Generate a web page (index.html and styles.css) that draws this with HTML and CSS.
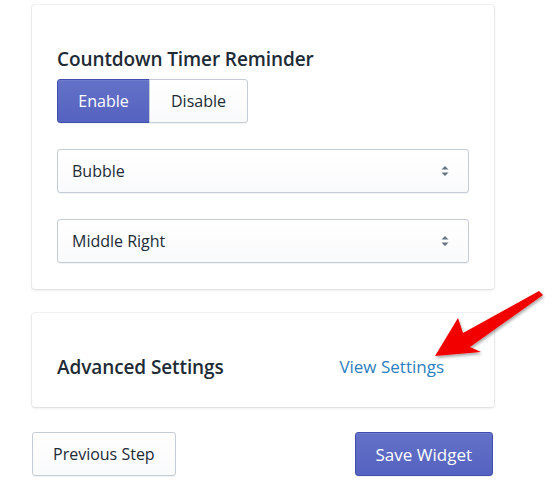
FILE: index.html
```html
<!DOCTYPE html>
<html>
<head>
<meta charset="utf-8">
<link rel="stylesheet" href="styles.css">
</head>
<body>
<div class="page">
  <section class="card card-main">
    <h2 class="heading">Countdown Timer Reminder</h2>
    <div class="segmented">
      <button class="btn btn-primary seg-left">Enable</button>
      <button class="btn seg-right">Disable</button>
    </div>
    <div class="select">
      <span>Bubble</span>
      <svg class="caret" width="10" height="12" viewBox="0 0 10 12"><path d="M5 1 L8.5 4.5 H1.5 Z M5 11 L8.5 7.5 H1.5 Z" fill="#637381"/></svg>
    </div>
    <div class="select">
      <span>Middle Right</span>
      <svg class="caret" width="10" height="12" viewBox="0 0 10 12"><path d="M5 1 L8.5 4.5 H1.5 Z M5 11 L8.5 7.5 H1.5 Z" fill="#637381"/></svg>
    </div>
  </section>
  <section class="card card-adv">
    <h2 class="heading heading-adv">Advanced Settings</h2>
    <a class="link" href="#">View Settings</a>
  </section>
  <div class="footer">
    <button class="btn btn-footer">Previous Step</button>
    <button class="btn btn-primary btn-footer btn-save">Save Widget</button>
  </div>
</div>
<svg class="pointer" width="558" height="494" viewBox="0 0 558 494">
  <defs>
    <filter id="sh" x="-20%" y="-20%" width="140%" height="140%">
      <feDropShadow dx="1" dy="2" stdDeviation="1.5" flood-color="#000" flood-opacity="0.35"/>
    </filter>
  </defs>
  <polygon points="435,356 458,318 463,333 539,291 543,295 470,347 481,352" fill="#f20000" filter="url(#sh)"/>
</svg>
</body>
</html>
```
FILE: styles.css
```css
* { box-sizing: border-box; }
html, body { margin: 0; padding: 0; background: #fff; }
body {
  font-family: "Open Sans", "Noto Sans", sans-serif;
  color: #212b36;
  position: relative;
  width: 558px;
  height: 494px;
  overflow: hidden;
}
.page {
  width: 462px;
  margin-left: 32px;
  padding-top: 5px;
}
.card {
  background: #fff;
  border-radius: 3px;
  box-shadow: 0 0 0 1px rgba(63,63,68,0.06), 0 1px 3px 0 rgba(63,63,68,0.15);
}
.card-main {
  padding: 42px 25px 26px;
  display: flex;
  flex-direction: column;
}
.heading {
  margin: 0;
  font-size: 19px;
  font-weight: 600;
  line-height: 24px;
  color: #212b36;
  letter-spacing: -0.1px;
}
.segmented {
  display: flex;
  margin-top: 8px;
}
.btn {
  font-family: inherit;
  font-size: 16px;
  height: 44px;
  padding: 0 20px;
  border: 1px solid #c4cdd5;
  border-radius: 3px;
  background: linear-gradient(to bottom, #fff, #f9fafb);
  color: #212b36;
  box-shadow: 0 1px 0 0 rgba(22,29,37,0.05);
  cursor: pointer;
}
.btn-primary {
  background: linear-gradient(to bottom, #6371c7, #5563c1);
  border-color: #3f4eae;
  color: #fff;
  box-shadow: inset 0 1px 0 0 #6f7bcb, 0 1px 0 0 rgba(22,29,37,0.05);
}
.seg-left {
  width: 93px;
  border-radius: 3px 0 0 3px;
}
.seg-right {
  width: 99px;
  border-radius: 0 3px 3px 0;
  margin-left: -1px;
  position: relative;
}
.select {
  margin-top: 26px;
  height: 44px;
  border: 1px solid #c4cdd5;
  border-radius: 3px;
  background: linear-gradient(to bottom, #fff, #f9fafb);
  box-shadow: 0 1px 0 0 rgba(22,29,37,0.05);
  display: flex;
  align-items: center;
  justify-content: space-between;
  padding: 0 18px 0 14px;
  font-size: 16px;
}
.caret { display: block; }
.card-adv {
  margin-top: 24px;
  height: 94px;
  padding: 42px 50px 0 25px;
  display: flex;
  justify-content: space-between;
  align-items: flex-start;
}
.heading-adv {
  font-size: 19px;
}
.link {
  color: #2c7fc0;
  text-decoration: none;
  font-size: 17px;
  line-height: 24px;
}
.footer {
  margin-top: 25px;
  display: flex;
  justify-content: space-between;
}
.btn-footer { padding: 0 20px; }
.btn-save { font-size: 17px; margin-right: 1px; }
.pointer {
  position: absolute;
  left: 0;
  top: 0;
  pointer-events: none;
}
```
